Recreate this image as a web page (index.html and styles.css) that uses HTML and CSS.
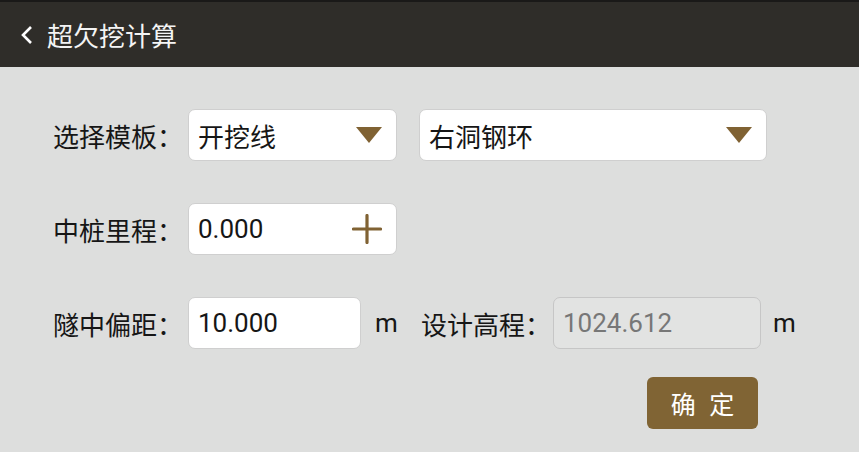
FILE: index.html
```html
<!DOCTYPE html>
<html>
<head>
    <meta charset="UTF-8">
    <title>超欠挖计算</title>
    <link rel="stylesheet" href="styles.css">
</head>
<body>
    <header>
        <svg class="back" width="14" height="20" viewBox="0 0 14 20">
            <polyline points="11,2 3,10 11,18" fill="none" stroke="#fff" stroke-width="2.6"/>
        </svg>
        <h1>超欠挖计算</h1>
    </header>
    <div class="content">
        <div class="row">
            <span class="label">选择模板：</span>
            <div class="box sel1">
                <span>开挖线</span>
                <span class="tri"></span>
            </div>
            <div class="box sel2">
                <span>右洞钢环</span>
                <span class="tri"></span>
            </div>
        </div>
        <div class="row">
            <span class="label">中桩里程：</span>
            <div class="box sel1">
                <span>0.000</span>
                <svg class="plus" width="30" height="30" viewBox="0 0 30 30">
                    <path d="M15 1.5V28.5M1.5 15H28.5" stroke="#806233" stroke-width="3.2" stroke-linecap="round" fill="none"/>
                </svg>
            </div>
        </div>
        <div class="row">
            <span class="label">隧中偏距：</span>
            <div class="box inp">
                <span>10.000</span>
            </div>
            <span class="unit">m</span>
            <span class="label2">设计高程：</span>
            <div class="box dis">
                <span>1024.612</span>
            </div>
            <span class="unit">m</span>
        </div>
        <div class="actions">
            <button>确 定</button>
        </div>
    </div>
</body>
</html>
```

FILE: styles.css
```css
*{
    margin: 0;
    padding: 0;
    box-sizing: border-box;
}
body{
    background-color: #dddedd;
    font-family: Roboto, "Noto Sans CJK SC", sans-serif;
    color: #161616;
    width: 859px;
    height: 452px;
    overflow: hidden;
}
header{
    height: 67px;
    background-color: #2f2d29;
    border-top: 2px solid #1a1918;
    display: flex;
    align-items: center;
    padding-left: 20px;
    color: #f4f4f4;
}
header .back{
    margin-right: 13px;
}
header h1{
    font-size: 26px;
    font-weight: normal;
    font-family: "Noto Sans CJK SC", sans-serif;
}
.content{
    padding: 42px 0 0 53px;
}
.row{
    display: flex;
    align-items: center;
    height: 52px;
    margin-bottom: 42px;
    font-size: 26px;
}
.row:nth-child(3){
    margin-bottom: 28px;
}
.label{
    width: 135px;
    font-family: "Noto Sans CJK SC", sans-serif;
    white-space: nowrap;
}
.label2{
    width: 132px;
    font-family: "Noto Sans CJK SC", sans-serif;
    white-space: nowrap;
}
.box{
    height: 52px;
    background-color: #fff;
    border: 1px solid #cfcfcf;
    border-radius: 7px;
    display: flex;
    align-items: center;
    justify-content: space-between;
    padding: 0 14px 0 9px;
    font-family: Roboto, "Noto Sans CJK SC", sans-serif;
}
.sel1{
    width: 209px;
}
.sel2{
    width: 348px;
    margin-left: 22px;
}
.inp{
    width: 173px;
}
.dis{
    width: 208px;
    background-color: #e2e3e2;
    border-color: #c6c6c6;
    color: #777;
}
.tri{
    width: 0;
    height: 0;
    border-left: 13px solid transparent;
    border-right: 13px solid transparent;
    border-top: 16px solid #806233;
}
.unit{
    width: 60px;
    padding-left: 14px;
}
.dis + .unit{
    padding-left: 12px;
}
.actions{
    display: flex;
    padding-left: 594px;
}
button{
    width: 111px;
    height: 52px;
    background-color: #806434;
    border: 0;
    border-radius: 6px;
    color: #fff;
    font-size: 25px;
    font-family: "Noto Sans CJK SC", sans-serif;
    letter-spacing: 4px;
    padding-left: 4px;
}
```
